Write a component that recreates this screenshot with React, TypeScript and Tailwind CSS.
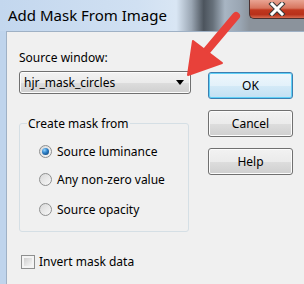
import React from "react";

const btn =
  "h-[27px] w-[85px] rounded-[3px] border text-[12px] text-black flex items-center justify-center";
const btnFace =
  "border-[#707070] bg-[linear-gradient(#f2f2f2_0%,#ebebeb_50%,#dddddd_51%,#cfcfcf_100%)] shadow-[inset_0_0_0_1px_#fcfcfc]";

function Radio({ checked, label }: { checked?: boolean; label: string }) {
  return (
    <div className="flex items-center h-[15px]">
      <span className="w-[13px] h-[13px] rounded-full border border-[#8e8f8f] bg-[linear-gradient(135deg,#d8d8d8,#f8f8f8)] flex items-center justify-center shrink-0">
        {checked ? (
          <span className="w-[7px] h-[7px] rounded-full bg-[radial-gradient(circle_at_35%_30%,#8fd3ff_0%,#2a7cc4_45%,#0b3a66_100%)]" />
        ) : null}
      </span>
      <span className="ml-[5px]">{label}</span>
    </div>
  );
}

export default function App() {
  return (
    <div
      className="relative w-[304px] h-[284px] overflow-hidden bg-[#bfd4ec] text-[12px] leading-[15px] text-black"
      style={{ fontFamily: '"Noto Sans", "Open Sans", sans-serif' }}
    >
      {/* title bar */}
      <div className="h-[31px] flex items-start bg-[linear-gradient(90deg,#c3d7ee_0%,#d0e0f2_45%,#d9e6f4_58%,#9aa6b3_63%,#4c545d_67%,#66707a_70%,#a8b5c3_74%,#9aa6b3_79%,#8b939c_82%,#8b939c_100%)]">
        <div className="pl-[8px] pt-[5px] text-[15px] leading-[20px] text-black">Add Mask From Image</div>
        <div className="ml-auto w-[55px] h-[19px] rounded-bl-[5px] border border-t-0 border-r-0 border-[#4a3030] bg-[linear-gradient(#e9a493_0%,#d7755e_45%,#c1381f_55%,#b8301a_80%,#d66a4f_100%)] flex items-center justify-center">
          <svg width="18" height="14" viewBox="0 0 18 14">
            <path d="M4 2 L14 12 M14 2 L4 12" stroke="#3a3a3a" strokeWidth="5" strokeLinecap="square" />
            <path d="M4 2 L14 12 M14 2 L4 12" stroke="#ffffff" strokeWidth="3" strokeLinecap="square" />
          </svg>
        </div>
      </div>

      {/* body */}
      <div className="flex h-[253px]">
        <div className="w-[7px] border-r border-[#9fb1c5]" />
        <div className="flex-1 bg-[#f0f0f0] border-t border-[#9fb1c5] flex">
          <div className="ml-[12px] pt-[18px] w-[173px] flex flex-col">
            <div>Source window:</div>
            <div
              className={`mt-[6px] h-[23px] w-[172px] rounded-[3px] border flex items-center pl-[4px] pr-[6px] ${btnFace}`}
            >
              <span>hjr_mask_circles</span>
              <svg className="ml-auto" width="8" height="5" viewBox="0 0 8 5">
                <path d="M0 0 H8 L4 5 Z" fill="#000" />
              </svg>
            </div>

            <fieldset className="mt-[22px] w-[170px] rounded-[3px] border border-[#d5dfe5] px-[7px] pb-[14px]">
              <legend className="px-[1px]">Create mask from</legend>
              <div className="mt-[13px] pl-[12px] flex flex-col gap-[13px]">
                <Radio checked label="Source luminance" />
                <Radio label="Any non-zero value" />
                <div className="mt-[2px]">
                  <Radio label="Source opacity" />
                </div>
              </div>
            </fieldset>

            <div className="mt-[22px] ml-[2px] flex items-center h-[15px]">
              <span className="w-[14px] h-[14px] border border-[#8e8f8f] bg-[#f4f4f4] p-[2px] shrink-0">
                <span className="block w-full h-full bg-[linear-gradient(135deg,#cfcfcf,#f6f6f6)]" />
              </span>
              <span className="ml-[4px]">Invert mask data</span>
            </div>
          </div>

          <div className="ml-[16px] pt-[40px] flex flex-col gap-[11px]">
            <div className={`${btn} border-[#3c7fb1] bg-[linear-gradient(#eef7fc_0%,#e3f1fa_50%,#d4eaf7_51%,#c3e0f3_100%)] shadow-[inset_0_0_0_1px_#5fd0f7]`}>
              OK
            </div>
            <div className={`${btn} ${btnFace}`}>Cancel</div>
            <div className={`${btn} ${btnFace}`}>Help</div>
          </div>
        </div>
      </div>

      {/* red arrow annotation */}
      <svg className="absolute left-0 top-0 pointer-events-none" width="304" height="284" viewBox="0 0 304 284">
        <path d="M236 16 L204 54" stroke="#e8413a" strokeWidth="8" strokeLinecap="round" />
        <path d="M188 75 L193 41 L222 63 Z" fill="#e8413a" stroke="#e8413a" strokeWidth="2" strokeLinejoin="round" />
      </svg>
    </div>
  );
}
